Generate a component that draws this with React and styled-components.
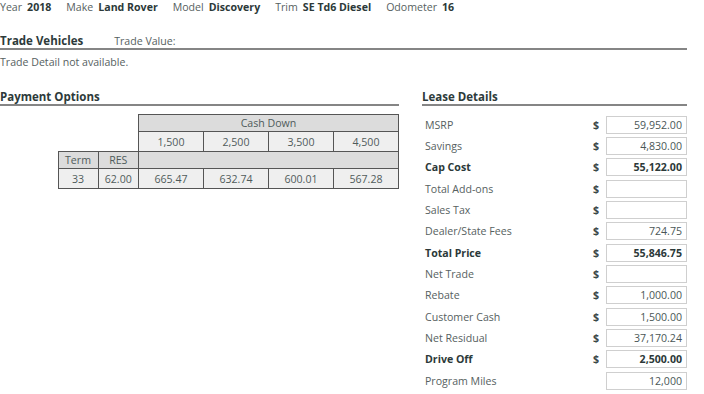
import React from "react";
import styled, { createGlobalStyle } from "styled-components";

const GlobalStyle = createGlobalStyle`
  body {
    margin: 0;
    background: #fff;
    font-family: "Open Sans", "Liberation Sans", sans-serif;
    font-size: 10.6px;
    color: #566161;
  }
`;

const Page = styled.div`
  width: 687px;
`;

const InfoBar = styled.div`
  display: flex;
  gap: 15px;
  height: 14px;
  line-height: 14px;
`;

const InfoItem = styled.span`
  display: flex;
  gap: 5px;
`;

const Strong = styled.b`
  font-weight: 700;
  color: #2c3939;
`;

const SectionHead = styled.div`
  display: flex;
  align-items: baseline;
  gap: 31px;
  height: 14px;
  line-height: 14px;
  margin-top: ${(p) => p.$top || 0}px;
  border-bottom: 2px solid #858585;
`;

const Heading = styled.h2`
  margin: 0;
  font-size: 11.5px;
  font-weight: 700;
  color: #2d3a3a;
`;

const Note = styled.div`
  margin-top: 5px;
  line-height: 14px;
`;

const Columns = styled.div`
  display: grid;
  grid-template-columns: 399px 265px;
  column-gap: 23px;
  margin-top: 21px;
`;

const Body = styled.div`
  display: flex;
  justify-content: ${(p) => (p.$right ? "flex-end" : "flex-start")};
  margin-top: 8px;
`;

const Grid = styled.table`
  border-collapse: collapse;
  table-layout: fixed;
  color: #4f5b5b;
`;

const Cell = styled.td`
  width: ${(p) => p.$w}px;
  height: ${(p) => (p.$tall ? 19 : 16)}px;
  padding: 0;
  text-align: center;
  border: ${(p) => (p.$blank ? "none" : "1px solid #555")};
  background: ${(p) =>
    p.$blank ? "transparent" : p.$head ? "#dcdcdc" : "#efefef"};
`;

const LeaseGrid = styled.div`
  display: grid;
  grid-template-columns: 171px 13px 81px;
  grid-auto-rows: 21.33px;
  align-items: center;
`;

const Label = styled.span`
  padding-left: 3px;
  font-weight: ${(p) => (p.$bold ? 700 : 400)};
  color: ${(p) => (p.$bold ? "#2c3939" : "#566161")};
`;

const Dollar = styled.span`
  font-weight: 700;
  color: #3b4747;
`;

const Box = styled.div`
  height: 18px;
  box-sizing: border-box;
  border: 1px solid #cfcfcf;
  padding: 0 4px;
  line-height: 16px;
  text-align: right;
  font-weight: ${(p) => (p.$bold ? 700 : 400)};
  color: ${(p) => (p.$bold ? "#2c3939" : "#4a5656")};
`;

const info = [
  ["Year", "2018"],
  ["Make", "Land Rover"],
  ["Model", "Discovery"],
  ["Trim", "SE Td6 Diesel"],
  ["Odometer", "16"],
];

const cashDown = ["1,500", "2,500", "3,500", "4,500"];
const payments = ["665.47", "632.74", "600.01", "567.28"];

const lease = [
  { label: "MSRP", value: "59,952.00", dollar: true },
  { label: "Savings", value: "4,830.00", dollar: true },
  { label: "Cap Cost", value: "55,122.00", dollar: true, bold: true },
  { label: "Total Add-ons", value: "", dollar: true },
  { label: "Sales Tax", value: "", dollar: true },
  { label: "Dealer/State Fees", value: "724.75", dollar: true },
  { label: "Total Price", value: "55,846.75", dollar: true, bold: true },
  { label: "Net Trade", value: "", dollar: true },
  { label: "Rebate", value: "1,000.00", dollar: true },
  { label: "Customer Cash", value: "1,500.00", dollar: true },
  { label: "Net Residual", value: "37,170.24", dollar: true },
  { label: "Drive Off", value: "2,500.00", dollar: true, bold: true },
  { label: "Program Miles", value: "12,000" },
];

function PaymentTable() {
  return (
    <Grid>
      <tbody>
        <tr>
          <Cell $blank $w={40} />
          <Cell $blank $w={40} />
          <Cell $head colSpan={4}>
            Cash Down
          </Cell>
        </tr>
        <tr>
          <Cell $blank />
          <Cell $blank />
          {cashDown.map((v) => (
            <Cell key={v} $w={64} $tall>
              {v}
            </Cell>
          ))}
        </tr>
        <tr>
          <Cell $head>Term</Cell>
          <Cell $head>RES</Cell>
          <Cell $head colSpan={4} />
        </tr>
        <tr>
          <Cell $tall>33</Cell>
          <Cell $tall>62.00</Cell>
          {payments.map((v) => (
            <Cell key={v} $tall>
              {v}
            </Cell>
          ))}
        </tr>
      </tbody>
    </Grid>
  );
}

export default function App() {
  return (
    <>
      <GlobalStyle />
      <Page>
        <InfoBar>
          {info.map(([k, v]) => (
            <InfoItem key={k}>
              {k}
              <Strong>{v}</Strong>
            </InfoItem>
          ))}
        </InfoBar>

        <SectionHead $top={20}>
          <Heading>Trade Vehicles</Heading>
          <span>Trade Value:</span>
        </SectionHead>
        <Note>Trade Detail not available.</Note>

        <Columns>
          <div>
            <SectionHead>
              <Heading>Payment Options</Heading>
            </SectionHead>
            <Body $right>
              <PaymentTable />
            </Body>
          </div>
          <div>
            <SectionHead>
              <Heading>Lease Details</Heading>
            </SectionHead>
            <Body>
              <LeaseGrid>
                {lease.map((r) => (
                  <React.Fragment key={r.label}>
                    <Label $bold={r.bold}>{r.label}</Label>
                    <Dollar>{r.dollar ? "$" : ""}</Dollar>
                    <Box $bold={r.bold}>{r.value}</Box>
                  </React.Fragment>
                ))}
              </LeaseGrid>
            </Body>
          </div>
        </Columns>
      </Page>
    </>
  );
}
